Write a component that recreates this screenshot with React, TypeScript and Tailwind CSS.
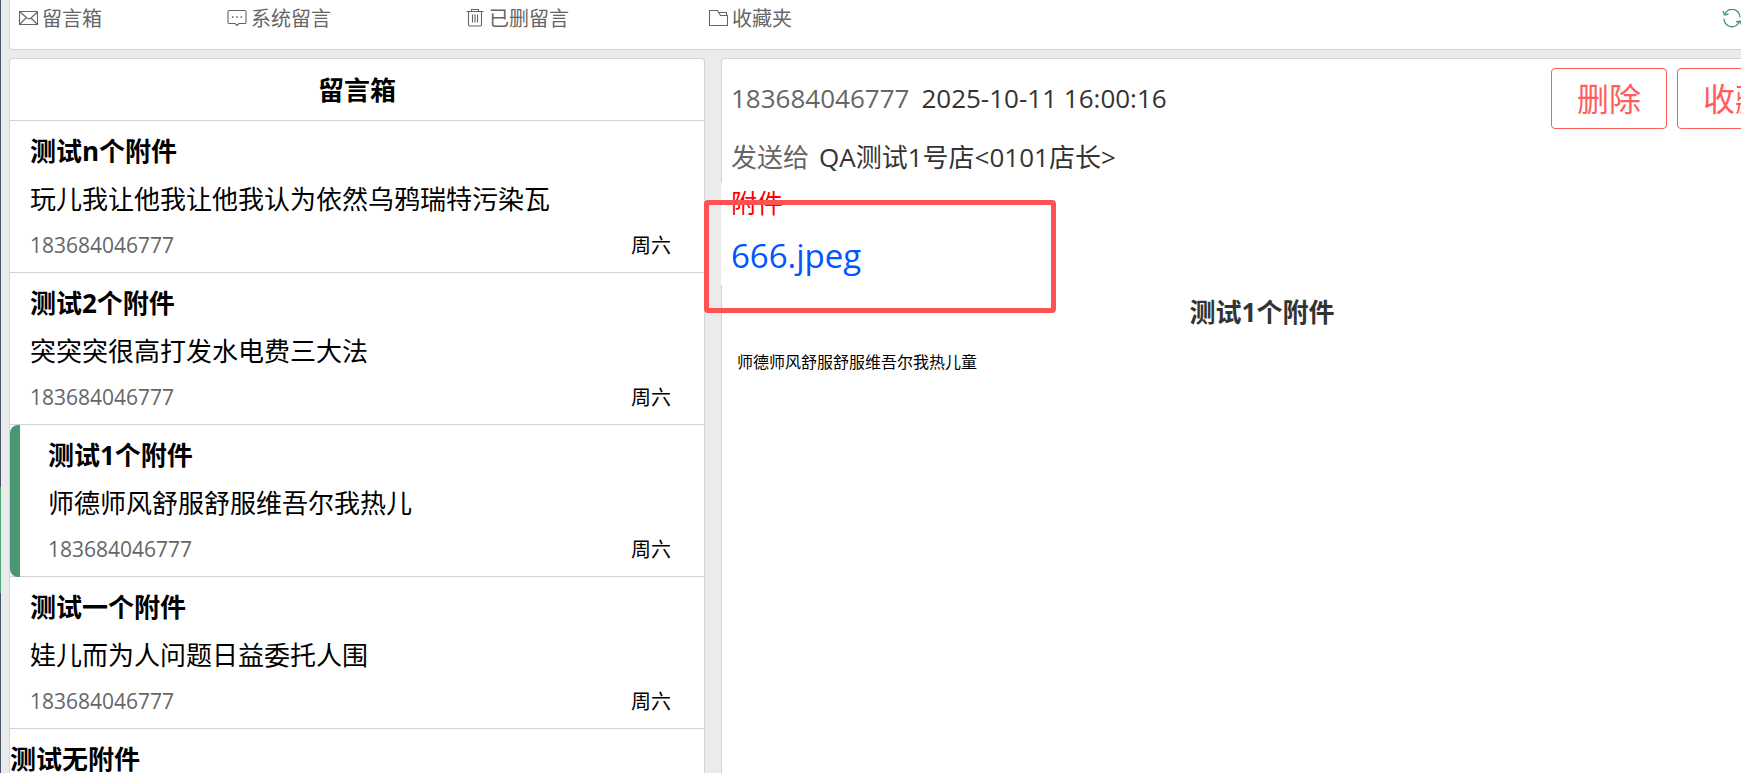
import type { ReactNode } from 'react'

type Message = {
  title: string
  body?: string
  sender?: string
  day?: string
  active?: boolean
}

const messages: Message[] = [
  { title: '测试n个附件', body: '玩儿我让他我让他我认为依然乌鸦瑞特污染瓦', sender: '183684046777', day: '周六' },
  { title: '测试2个附件', body: '突突突很高打发水电费三大法', sender: '183684046777', day: '周六' },
  { title: '测试1个附件', body: '师德师风舒服舒服维吾尔我热儿', sender: '183684046777', day: '周六', active: true },
  { title: '测试一个附件', body: '娃儿而为人问题日益委托人围', sender: '183684046777', day: '周六' },
  { title: '测试无附件' },
]

function Icon({ children }: { children: ReactNode }) {
  return (
    <svg viewBox="0 0 20 20" className="size-5 shrink-0" fill="none" stroke="currentColor" strokeWidth="1.1" aria-hidden="true">
      {children}
    </svg>
  )
}

function Tab({ label, className, children }: { label: string; className: string; children: ReactNode }) {
  return (
    <div className={`shrink-0 ${className}`}>
      <button type="button" className="flex items-center gap-1 text-xl leading-8 text-[#666]">
        <Icon>{children}</Icon>
        {label}
      </button>
    </div>
  )
}

function Toolbar() {
  return (
    <nav className="flex h-[50px] items-start rounded-b border border-t-0 border-[#d3d3d3] bg-white pt-[3px] pl-2">
      <Tab label="留言箱" className="w-[209px]">
        <path d="M1.5 2.5h18v13h-18zM1.5 2.5l7.500 6.500q2 1.500 4 0l7-6.500M1.500 15.500l6.500-6.500M19.500 15.500l-6.500-6.500" />
      </Tab>
      <Tab label="系统留言" className="w-[238px]">
        <path d="M2 1.500h16a1 1 0 0 1 1 1v11a1 1 0 0 1-1 1h-6l-2 2-2-2H2a1 1 0 0 1-1-1v-11a1 1 0 0 1 1-1z" />
        <path d="M5 8h1.500M9.250 8h1.500M13.500 8H15" strokeWidth="1.500" />
      </Tab>
      <Tab label="已删留言" className="w-[243px]">
        <path d="M1.500 2.500h17M6.500 2.500v-2h7v2M3.500 2.500v13a1.500 1.500 0 0 0 1.500 1.500h10a1.500 1.500 0 0 0 1.500-1.500v-13M7.500 5.500v8M10 5.500v8M12.500 5.500v8" />
      </Tab>
      <Tab label="收藏夹" className="w-[209px]">
        <path d="M1.500 1.500h8l3 5h7v10h-18zM11 3.500h7.500v3" />
      </Tab>
      <button type="button" aria-label="刷新" className="mr-[60px] ml-auto flex h-8 items-center text-[#4b9774]">
        <Icon>
          <path d="M2.500 5.500a8 8 0 0 1 15.500 3M17.500 12.500A8 8 0 0 1 2 9.500M1 2l1.500 4 4-1M19.500 16l-1.500-4-4 1" strokeWidth="1.300" />
        </Icon>
      </button>
    </nav>
  )
}

function MessageItem({ title, body, sender, day, active }: Message) {
  const indent = active ? 'pl-[38px]' : body ? 'pl-5' : ''
  return (
    <li className={`relative min-h-[152px] border-b border-[#d3d3d3] pt-1.5 pr-[33px] ${indent}`}>
      {active && <span className="absolute top-0 -bottom-px left-0 w-2.5 rounded-l-lg bg-[#4b9774]" />}
      <h3 className="text-[26px] leading-[48px] font-bold">{title}</h3>
      {body && <p className="truncate text-[26px] leading-[48px]">{body}</p>}
      {sender && (
        <div className="flex items-baseline justify-between leading-[44px]">
          <span className="text-[21px] text-[#666]">{sender}</span>
          <span className="text-xl">{day}</span>
        </div>
      )}
    </li>
  )
}

function MessageList() {
  return (
    <section className="w-[696px] shrink-0 overflow-hidden rounded-t border border-b-0 border-[#d3d3d3] bg-white">
      <h2 className="border-b border-[#d3d3d3] pt-0.5 text-center text-[26px] leading-[59px] font-bold">留言箱</h2>
      <ul>
        {messages.map((m) => (
          <MessageItem key={m.title} {...m} />
        ))}
      </ul>
    </section>
  )
}

function ActionButton({ children }: { children: ReactNode }) {
  return (
    <button type="button" className="h-[61px] w-[116px] rounded border border-[#ff5c5c] text-[32px] text-[#ff5c5c]">
      {children}
    </button>
  )
}

function MessageDetail() {
  return (
    <article className="relative min-w-0 flex-1 rounded-t border border-b-0 border-[#d3d3d3] bg-white text-[26px] text-[#333]">
      <header className="px-[9px] pt-[9px]">
        <div className="flex items-center justify-between">
          <p className="flex gap-3">
            <span className="text-[#666]">183684046777</span>
            <time>2025-10-11 16:00:16</time>
          </p>
          <div className="flex gap-2.5">
            <ActionButton>删除</ActionButton>
            <ActionButton>收藏</ActionButton>
          </div>
        </div>
        <p className="flex h-[54px] gap-2.5 leading-[56px]">
          <span className="text-[#666]">发送给</span>
          <span>QA测试1号店&lt;0101店长&gt;</span>
        </p>
      </header>

      <div className="-ml-px h-[102px] bg-white pl-2.5">
        <p className="leading-[40px] text-[#f00]">附件</p>
        <a href="#attachment" className="block text-[33px] leading-[66px] text-[#0055ff]">666.jpeg</a>
      </div>

      <h1 className="text-center leading-[54px] font-bold">测试1个附件</h1>
      <p className="px-[15px] text-base leading-[46px] text-black">师德师风舒服舒服维吾尔我热儿童</p>

      {/* highlight around the attachment */}
      <div className="pointer-events-none absolute top-[141px] -left-[18px] h-[113px] w-[352px] rounded-sm border-5 border-[#ff5252]" />
    </article>
  )
}

export default function App() {
  return (
    <div className="flex h-screen overflow-hidden bg-[#ebebeb] font-['Open_Sans','Noto_Sans_CJK_SC',sans-serif] text-black">
      <div className="flex w-px shrink-0 flex-col bg-[#475669] pt-[487px]">
        <div className="h-[106px] bg-[#4ba678]" />
      </div>
      {/* the page runs a little past the right edge of the window */}
      <main className="-mr-[62px] flex min-w-0 flex-1 flex-col gap-2 pl-2">
        <Toolbar />
        <div className="flex min-h-0 flex-1 gap-4">
          <MessageList />
          <MessageDetail />
        </div>
      </main>
    </div>
  )
}
